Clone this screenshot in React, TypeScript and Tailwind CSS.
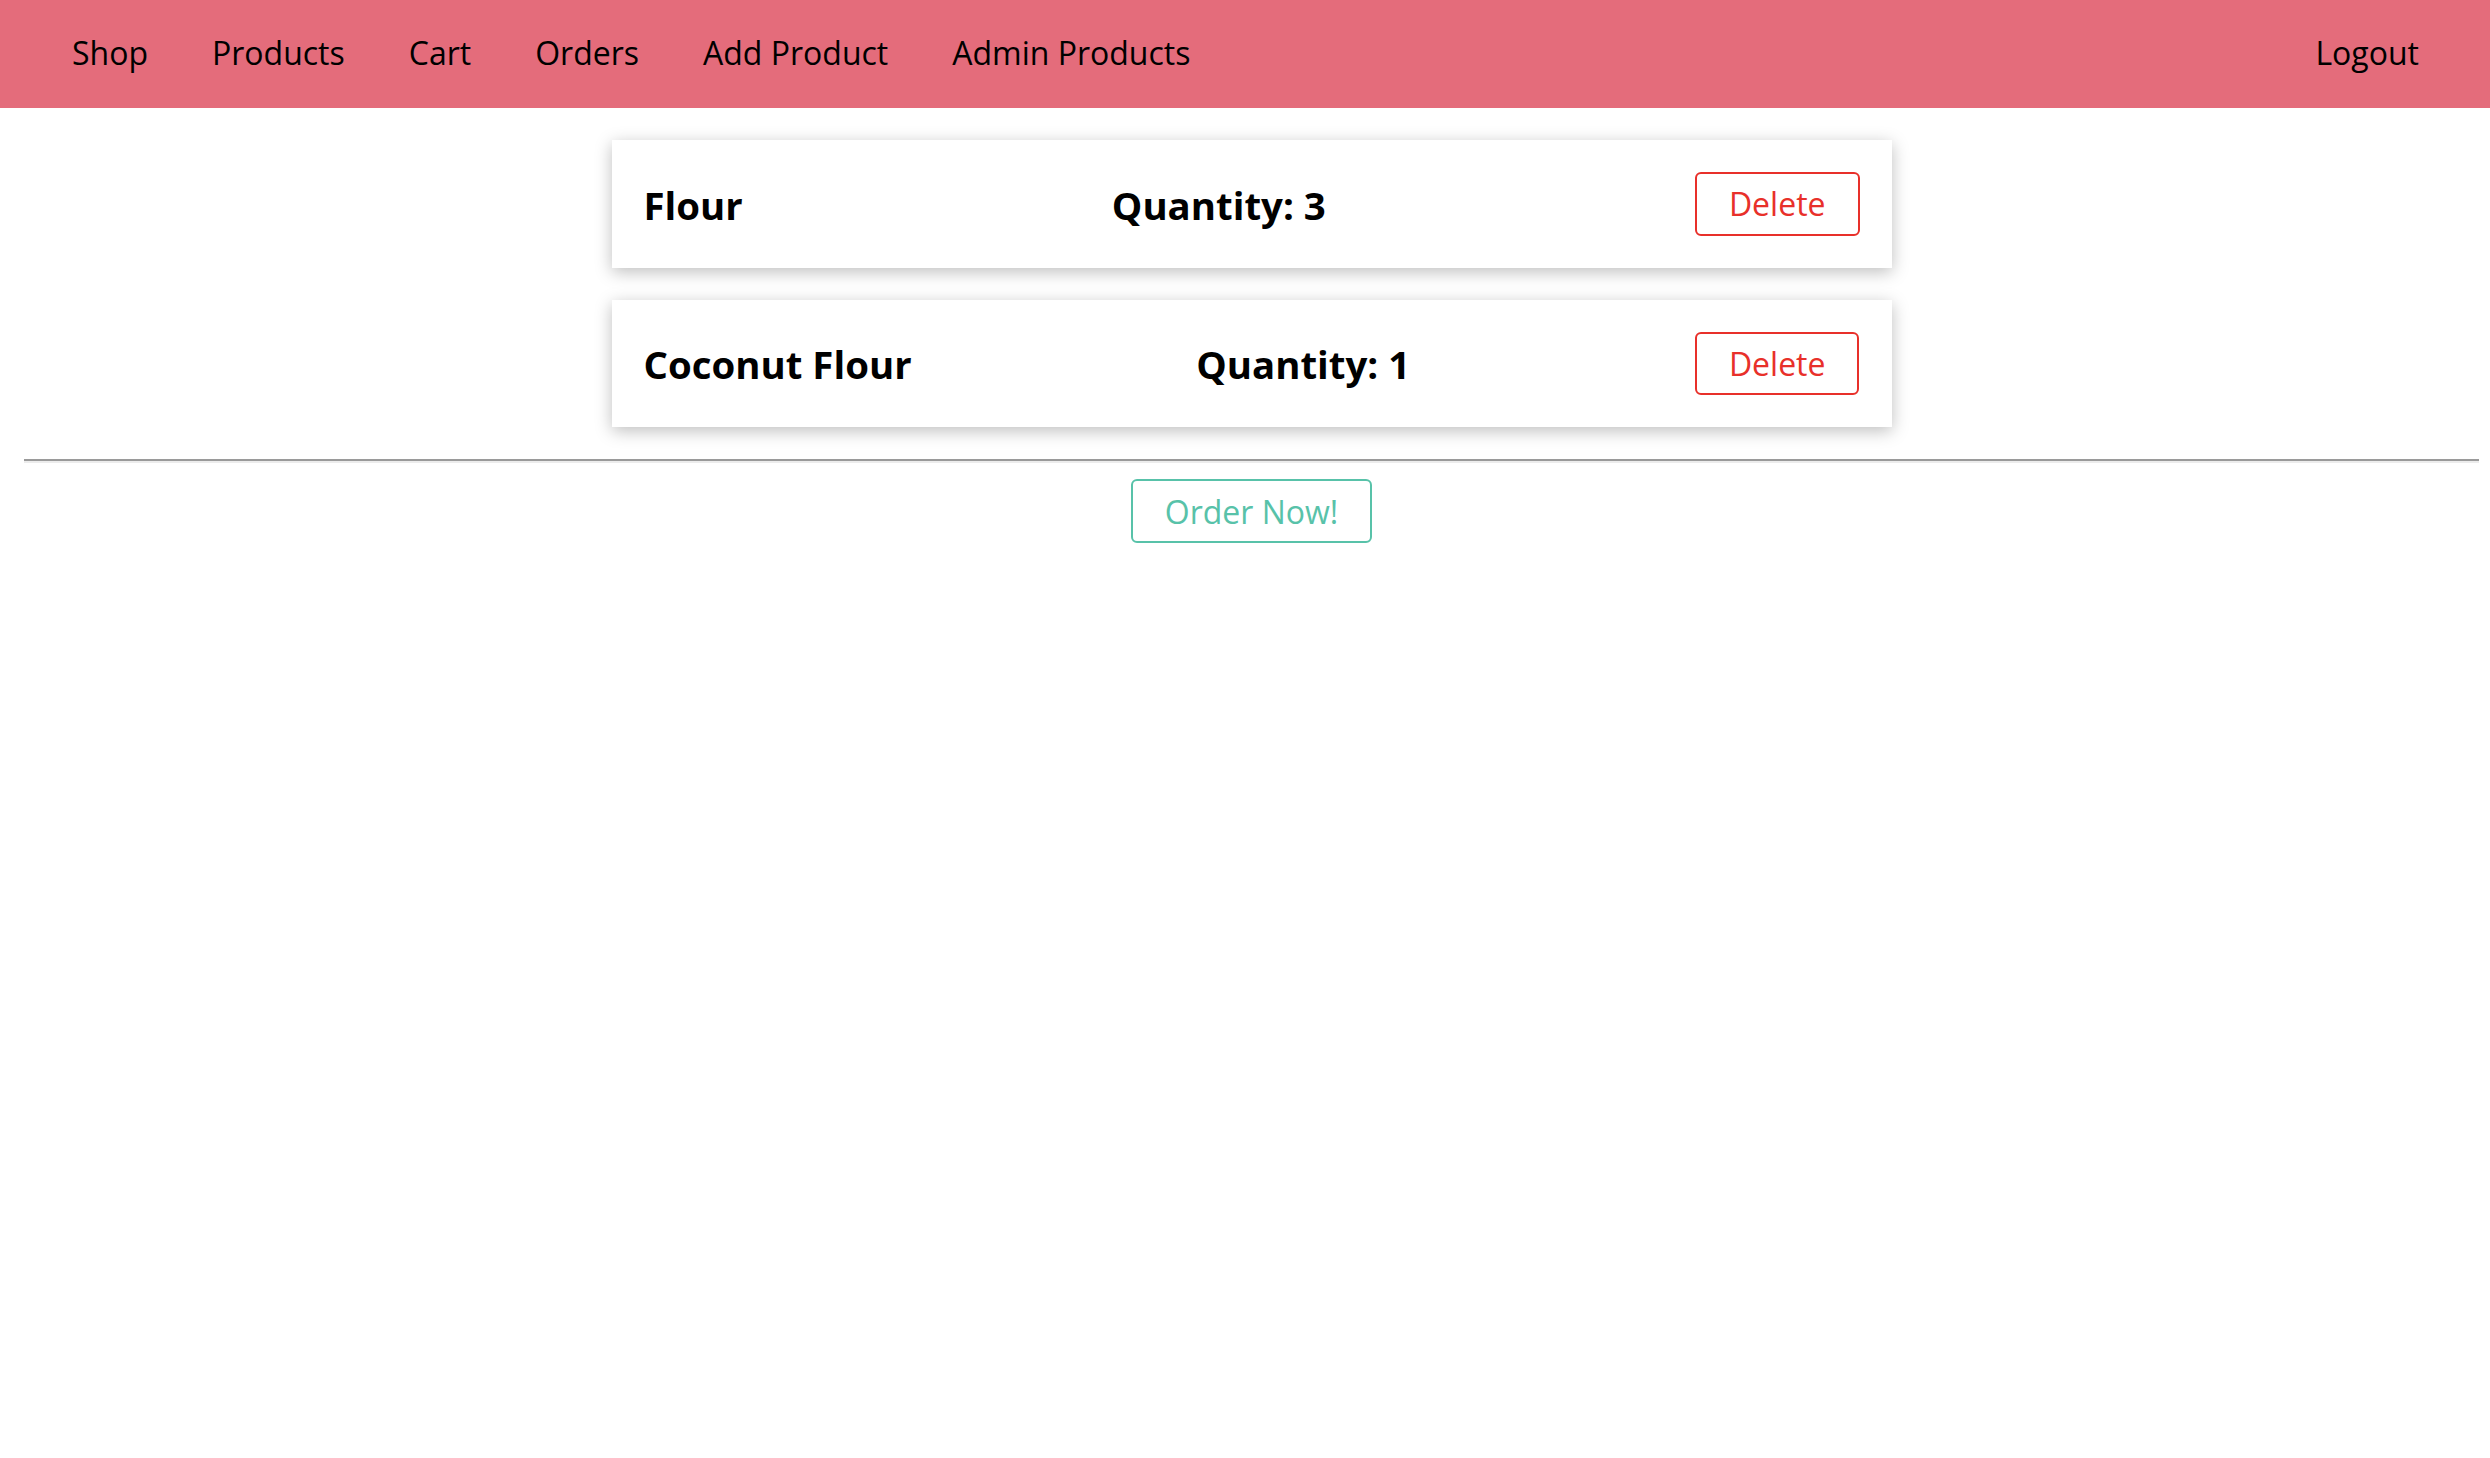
import React from "react";

type CartItem = {
  id: string;
  title: string;
  quantity: number;
};

const cartItems: CartItem[] = [
  { id: "p1", title: "Flour", quantity: 3 },
  { id: "p2", title: "Coconut Flour", quantity: 1 },
];

const navLinks = ["Shop", "Products", "Cart", "Orders", "Add Product", "Admin Products"];

const App: React.FC = () => {
  return (
    <div className="min-h-screen bg-white text-black font-['Open_Sans',sans-serif]">
      {/* 顶部导航 */}
      <header className="h-[108px] bg-[#e46c7b] flex items-center justify-between pl-[72px] pr-[71px] pb-[3px]">
        <nav>
          <ul className="flex items-center gap-[64px] text-[32px] leading-none">
            {navLinks.map((link) => (
              <li key={link}>
                <a href="#" className="text-black">
                  {link}
                </a>
              </li>
            ))}
          </ul>
        </nav>
        <a href="#" className="text-[32px] leading-none text-black">
          Logout
        </a>
      </header>

      {/* 购物车列表 */}
      <main className="pt-[32px] pl-[24px] pr-[11px]">
        <ul className="w-[1280px] mx-auto flex flex-col gap-[32px]">
          {cartItems.map((item) => (
            <li
              key={item.id}
              className="flex items-center justify-between p-[32px] bg-white shadow-[0_4px_16px_rgba(0,0,0,0.26)]"
            >
              <h1 className="m-0 text-[38.4px] font-bold leading-[1.362] pt-[2px]">{item.title}</h1>
              <h2 className="m-0 text-[38.4px] font-bold leading-[1.362] pt-[2px]">
                Quantity: {item.quantity}
              </h2>
              <button className="px-[32px] py-[8px] text-[32px] leading-[1.362] text-[#e8302a] border-2 border-[#e8302a] rounded-[6px] bg-white">
                Delete
              </button>
            </li>
          ))}
        </ul>

        {/* 分隔线 + 下单 */}
        <hr className="mt-[32px] mb-[16px] border-0 border-t-2 border-b-2 border-t-[#9a9a9a] border-b-[#ececec]" />

        <div className="flex justify-center">
          <button className="px-[32px] pt-[9px] pb-[7px] text-[32px] leading-[1.362] text-[#58c2a9] border-2 border-[#58c2a9] rounded-[6px] bg-white">
            Order Now!
          </button>
        </div>
      </main>
    </div>
  );
};

export default App;
